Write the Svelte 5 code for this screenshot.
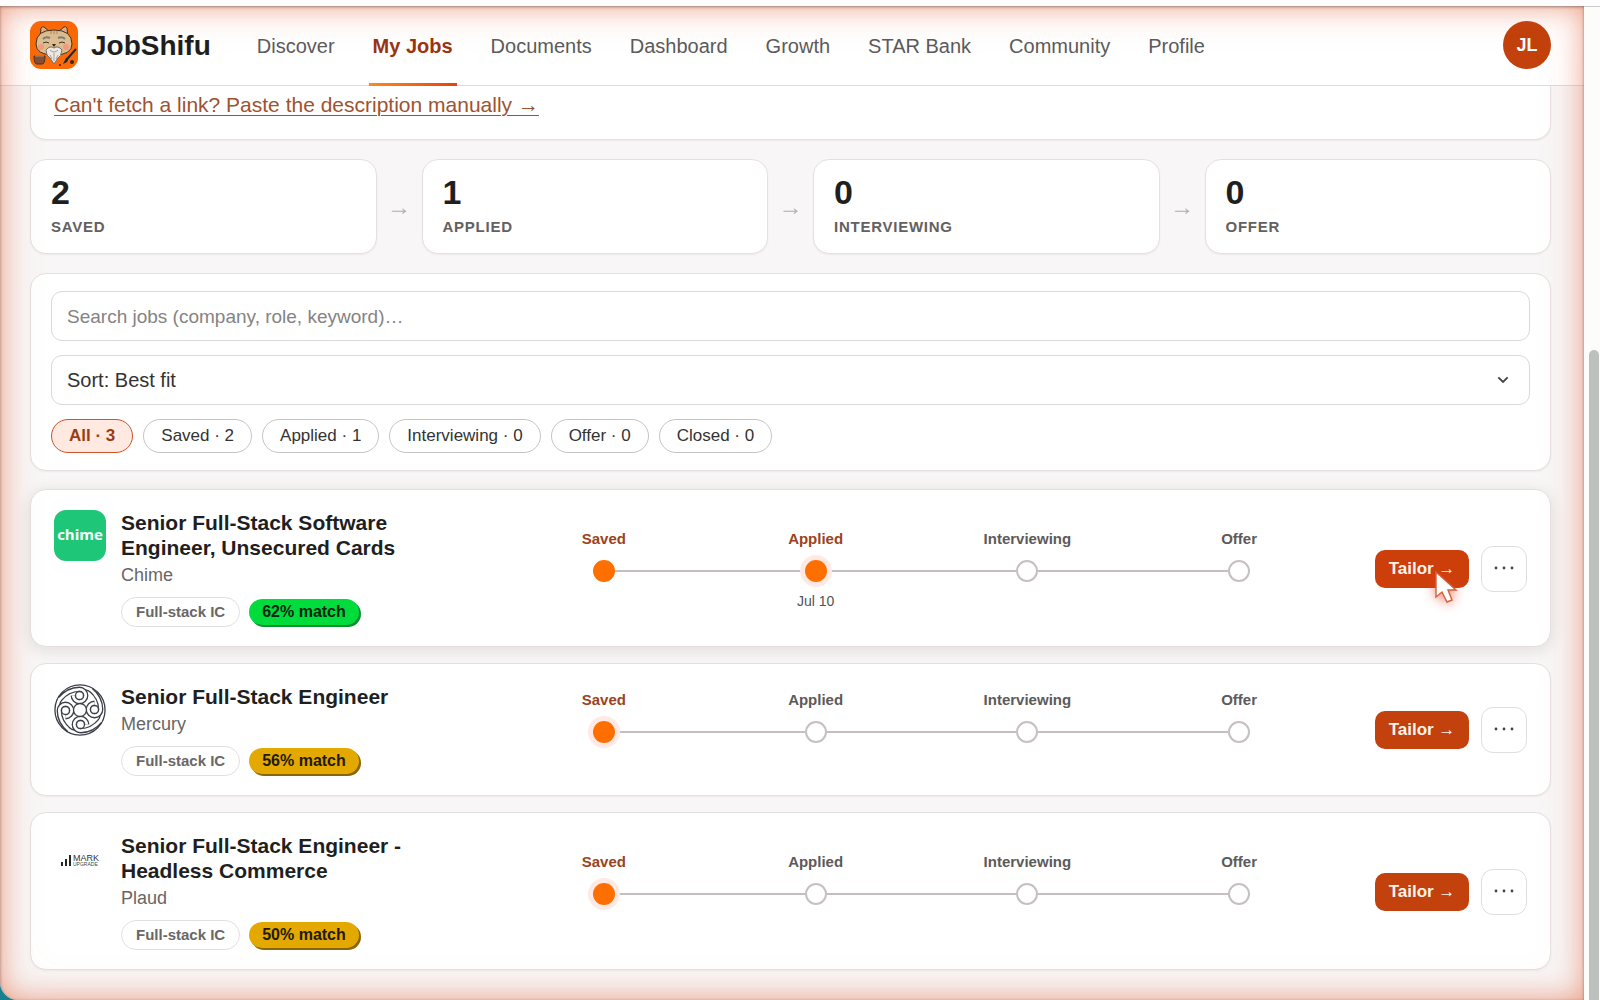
<script lang="ts">
  interface Job {
    id: string;
    title: string;
    company: string;
    role: string;
    match: number;
    stage: number;
    date?: string;
  }

  const navItems = ['Discover', 'My Jobs', 'Documents', 'Dashboard', 'Growth', 'STAR Bank', 'Community', 'Profile'];
  const stages = ['Saved', 'Applied', 'Interviewing', 'Offer'];

  const stats = [
    { label: 'Saved', count: 2 },
    { label: 'Applied', count: 1 },
    { label: 'Interviewing', count: 0 },
    { label: 'Offer', count: 0 }
  ];

  const filters = [{ label: 'All', count: 3 }, ...stats, { label: 'Closed', count: 0 }];

  const jobs: Job[] = [
    {
      id: 'chime',
      title: 'Senior Full-Stack Software Engineer, Unsecured Cards',
      company: 'Chime',
      role: 'Full-stack IC',
      match: 62,
      stage: 1,
      date: 'Jul 10'
    },
    { id: 'mercury', title: 'Senior Full-Stack Engineer', company: 'Mercury', role: 'Full-stack IC', match: 56, stage: 0 },
    {
      id: 'plaud',
      title: 'Senior Full-Stack Engineer - Headless Commerce',
      company: 'Plaud',
      role: 'Full-stack IC',
      match: 50,
      stage: 0
    }
  ];

  let activeNav = $state('My Jobs');
  let activeFilter = $state('All');
  let search = $state('');
  let sort = $state('fit');
</script>

<div class="window">
  <div class="screen">
    <header class="header">
      <a class="brand" href="#home">
        <svg class="brand-logo" viewBox="0 0 48 48" aria-hidden="true">
          <rect width="48" height="48" rx="11" fill="#fb6a06" />
          <path d="M10 16 11 7q1-2 3-1l6 5M28 11l6-5q2-1 3 1l1 9" fill="#d9b98a" stroke="#41301f" />
          <path d="m12 12 1-4 4 4M31 12l4-4 1 4" fill="#e99b84" />
          <path d="M6 23q0-14 18-14t18 14q0 11-18 11T6 23z" fill="#dcbf92" stroke="#41301f" />
          <path d="M21 10v3M24 10v3M27 10v3" stroke="#a58a60" />
          <path d="M13 18q3-3 7-1M28 17q4-2 7 1" fill="none" stroke="#777e80" stroke-width="2" />
          <path d="M13 22q3-2 6 0M29 22q3-2 6 0" fill="none" stroke="#41301f" stroke-width="1" />
          <circle cx="11" cy="26" r="3" fill="#f49a80" />
          <circle cx="36" cy="26" r="3" fill="#f49a80" />
          <path d="M22 23h4l-2 3z" fill="#33251b" />
          <path d="M16 29q4-5 8-2 4-3 8 2-1 7-4 8l-4 6-4-6q-4-2-4-8z" fill="#eee9e2" stroke="#74706b" />
          <path d="M20 29q4 4 8 0M24 32v8M20 34l2 4M28 34l-2 4" fill="none" stroke="#a6a29d" />
          <path d="M4 35h11q0 8-3 8H7q-3 0-3-8z" fill="#855036" stroke="#4d3021" />
          <path d="M5 35h9" stroke="#bda293" />
          <path d="m33 43 3-6 4-2-3 6z" fill="#262626" />
          <path d="m38 37 8-9" stroke="#262626" stroke-width="2" />
          <circle cx="42" cy="41" r="2" fill="#39261c" />
          <circle cx="30" cy="44" r="1" fill="#39261c" />
        </svg>
        <span>JobShifu</span>
      </a>
      <nav class="nav">
        {#each navItems as item (item)}
          <a href="#{item}" class:active={activeNav === item} onclick={() => (activeNav = item)}>{item}</a>
        {/each}
      </nav>
      <button type="button" class="avatar" aria-label="Account">JL</button>
    </header>

    <main class="content">
      <section class="card add-card">
        <a href="#manual">Can't fetch a link? Paste the description manually →</a>
      </section>

      <section class="stats">
        {#each stats as stat, i (stat.label)}
          {#if i > 0}
            <span class="stat-arrow">→</span>
          {/if}
          <div class="card stat">
            <strong>{stat.count}</strong>
            <span>{stat.label}</span>
          </div>
        {/each}
      </section>

      <section class="card filters">
        <input type="search" class="field" aria-label="Search jobs" placeholder="Search jobs (company, role, keyword)…" bind:value={search} />
        <div class="select-wrap">
          <select class="field" aria-label="Sort jobs" bind:value={sort}>
            <option value="fit">Sort: Best fit</option>
            <option value="new">Sort: Newest</option>
          </select>
          <svg viewBox="0 0 12 8" aria-hidden="true"><path d="m2 2 4 4 4-4" /></svg>
        </div>
        <div class="chips">
          {#each filters as filter (filter.label)}
            <button
              type="button"
              class="chip"
              class:active={activeFilter === filter.label}
              onclick={() => (activeFilter = filter.label)}
            >
              {filter.label} · {filter.count}
            </button>
          {/each}
        </div>
      </section>

      <section class="jobs">
        {#each jobs as job, i (job.id)}
          <article class="card job" class:hovered={i === 0}>
            <div class="job-info">
              {#if job.id === 'chime'}
                <svg class="job-logo" viewBox="0 0 52 52" aria-label="Chime">
                  <rect width="52" height="51" rx="12" fill="#1ec677" />
                  <text x="26" y="30" text-anchor="middle" class="chime-text">chime</text>
                </svg>
              {:else if job.id === 'mercury'}
                <svg class="job-logo mercury" viewBox="0 0 52 52" aria-label="Mercury">
                  <circle class="edge" cx="26" cy="26" r="23" />
                  <circle class="fill" cx="26" cy="26" r="23" />
                  {#each [0, 270, 180, 90] as angle (angle)}
                    <g transform="rotate({angle} 26 26)">
                      <path class="edge" d="M6 15Q14 5.300 25.500 5.300a6.200 6.200 0 1 1-6.200 6.200" />
                      <path class="fill" d="M5 16Q14 5.300 25.500 5.300a6.200 6.200 0 1 1-6.200 6.200" />
                      <circle class="hub" cx="25.500" cy="11.500" r="4" />
                    </g>
                  {/each}
                  <circle class="hub" cx="26" cy="26" r="6.5" />
                </svg>
              {:else}
                <svg class="job-logo" viewBox="0 0 52 52" aria-label="Mark Upgrade">
                  <path d="M8 29v4M12 26v7M16 22v11" stroke="#252525" stroke-width="2" />
                  <text x="19" y="28" class="mark-text">MARK</text>
                  <text x="19" y="33" class="upgrade-text">UPGRADE</text>
                </svg>
              {/if}
              <div class="job-text">
                <h2>{job.title}</h2>
                <p>{job.company}</p>
                <div class="tags">
                  <span class="tag">{job.role}</span>
                  <span class="match" class:good={job.match >= 60}>{job.match}% match</span>
                </div>
              </div>
            </div>

            <ol class="track">
              {#each stages as stage, s (stage)}
                <li class:done={s <= job.stage} class:current={s === job.stage}>
                  <span class="step-label">{stage}</span>
                  <span class="marker"><i class="line"></i><i class="dot"></i><i class="line"></i></span>
                  <span class="step-date">{s === job.stage && job.date ? job.date : ''}</span>
                </li>
              {/each}
            </ol>

            <div class="actions">
              <button type="button" class="tailor">Tailor →</button>
              <button type="button" class="more" aria-label="More actions">
                <svg viewBox="0 0 22 4" aria-hidden="true">
                  <circle cx="3" cy="2" r="1.4" /><circle cx="11" cy="2" r="1.4" /><circle cx="19" cy="2" r="1.4" />
                </svg>
              </button>
              {#if i === 0}
                <svg class="cursor" viewBox="0 0 24 34" aria-hidden="true">
                  <path d="M2 2v25l6-5 5 10 5-2-4-10h8z" />
                </svg>
              {/if}
            </div>
          </article>
        {/each}
      </section>
    </main>
  </div>
  <div class="scrollbar"><div class="thumb"></div></div>
</div>

<style>
  :global(body) {
    background: #16818f;
  }

  .window {
    display: flex;
    box-sizing: border-box;
    min-height: 100vh;
    border-top: 6px solid #fdfdfd;
    font-family: 'Liberation Sans', Arial, sans-serif;
    color: #1f1f1f;
  }

  .window *,
  .window *::after {
    box-sizing: border-box;
  }

  .screen {
    position: relative;
    flex: 1;
    min-width: 0;
    overflow: hidden;
    background: #f8f6f6;
    border-bottom-left-radius: 18px;
  }

  /* warm glow round the edges of the shared window */
  .screen::after {
    content: '';
    position: absolute;
    inset: 0;
    border-bottom-left-radius: 18px;
    box-shadow:
      inset 0 1px 3px rgba(70, 40, 30, 0.5),
      inset 0 0 28px rgba(226, 84, 40, 0.52),
      inset 0 0 52px rgba(226, 110, 70, 0.1);
    pointer-events: none;
  }

  .scrollbar {
    display: flex;
    align-items: flex-end;
    justify-content: center;
    width: 16px;
    padding-left: 3px;
    background: #fcfcfb;
    border-top: 1px solid #c9cccb;
  }

  .thumb {
    width: 10px;
    height: 65.5%;
    border-radius: 5px 5px 0 0;
    background: #bdc1be;
  }

  .header {
    display: flex;
    align-items: center;
    height: 80px;
    padding: 0 33px 2px 30px;
    background: #fff;
    border-bottom: 1px solid #dedada;
  }

  .brand {
    display: flex;
    align-items: center;
    gap: 13px;
    margin-right: 42px;
    color: #1f1f1f;
    font-size: 28px;
    font-weight: 700;
    text-decoration: none;
  }

  .brand span {
    padding-top: 3px;
  }

  .brand-logo {
    width: 48px;
    height: 48px;
  }

  .nav {
    display: flex;
    gap: 30px;
    align-self: stretch;
    margin-bottom: -3px;
  }

  .nav a {
    display: flex;
    align-items: center;
    padding: 3px 4px 0;
    border-bottom: 3px solid transparent;
    color: #5b5b5b;
    font-size: 20px;
    text-decoration: none;
    white-space: nowrap;
  }

  .nav a.active {
    color: #9a3412;
    font-weight: 700;
    border-image: linear-gradient(90deg, #ff8a1f, #e8410a) 1;
  }

  .avatar {
    width: 48px;
    height: 48px;
    margin-left: auto;
    padding: 2px 0 0;
    border: none;
    border-radius: 50%;
    background: #c2410c;
    color: #fff;
    font: 700 18px 'Liberation Sans', Arial, sans-serif;
  }

  .content {
    padding: 0 33px 30px 30px;
  }

  .card {
    background: #fff;
    border: 1px solid #e5e0df;
    border-radius: 16px;
    box-shadow: 0 1px 2px rgba(60, 30, 20, 0.06);
  }

  .add-card {
    padding: 7px 23px 22px;
    border-top: none;
    border-radius: 0 0 16px 16px;
  }

  .add-card a {
    display: block;
    color: #a0522f;
    font-size: 21px;
    line-height: 24px;
    text-decoration-thickness: 1px;
    text-underline-offset: 3px;
  }

  .stats {
    display: flex;
    align-items: center;
    margin: 19px 0;
  }

  .stat {
    display: flex;
    flex: 1;
    flex-direction: column;
    height: 95px;
    padding: 13px 20px;
  }

  .stat strong {
    font-size: 34px;
    line-height: 38px;
  }

  .stat span {
    margin-top: 6px;
    color: #636060;
    font-size: 15px;
    font-weight: 700;
    letter-spacing: 0.05em;
    line-height: 20px;
    text-transform: uppercase;
  }

  .stat-arrow {
    width: 45px;
    color: #b5b1b0;
    font-size: 24px;
    text-align: center;
  }

  .filters {
    display: flex;
    flex-direction: column;
    gap: 14px;
    padding: 17px 20px;
  }

  .field {
    width: 100%;
    height: 50px;
    padding: 0 15px;
    border: 1px solid #dcd8d7;
    border-radius: 11px;
    outline: none;
    appearance: none;
    background: #fff;
    color: #333;
    font: 20px 'Liberation Sans', Arial, sans-serif;
  }

  input.field {
    padding-top: 2px;
    font-size: 19px;
  }

  .field::placeholder {
    color: #858383;
  }

  .select-wrap {
    position: relative;
    display: flex;
  }

  .select-wrap svg {
    position: absolute;
    top: 20px;
    right: 20px;
    width: 14px;
    fill: none;
    stroke: #444;
    stroke-width: 1.6;
    pointer-events: none;
  }

  .chips {
    display: flex;
    flex-wrap: wrap;
    gap: 10px;
  }

  .chip {
    height: 34px;
    padding: 0 17px 1px;
    border: 1px solid #c8c4c3;
    border-radius: 17px;
    background: #fff;
    color: #333;
    font: 17px 'Liberation Sans', Arial, sans-serif;
    cursor: pointer;
  }

  .chip.active {
    border-color: #d1532a;
    background: #ffe9e0;
    color: #9a3c12;
    font-weight: 700;
  }

  .jobs {
    display: flex;
    flex-direction: column;
    gap: 16px;
    margin-top: 18px;
  }

  .job {
    display: grid;
    grid-template-columns: 420px minmax(0, 1fr) auto;
    align-items: center;
    column-gap: 24px;
    padding: 20px 23px 19px;
  }

  .job.hovered {
    box-shadow: 0 3px 16px rgba(50, 35, 25, 0.12);
  }

  .job-info {
    display: flex;
    align-self: start;
    gap: 15px;
  }

  .job-logo {
    flex: none;
    width: 52px;
    height: 52px;
  }

  .chime-text {
    fill: #fff;
    font: 700 15px 'Open Sans', sans-serif;
  }

  .mark-text {
    fill: #333;
    font: 9px 'Liberation Sans', sans-serif;
  }

  .upgrade-text {
    fill: #444;
    font: 5px 'Liberation Sans', sans-serif;
  }

  .mercury {
    fill: none;
  }

  .mercury .edge {
    stroke: #3b3e49;
    stroke-width: 5.4;
  }

  .mercury .fill {
    stroke: #fff;
    stroke-width: 2.8;
  }

  .hub {
    fill: #fff;
    stroke: #3b3e49;
    stroke-width: 1.3;
  }

  .job-text h2 {
    max-width: 300px;
    margin: 0;
    font-size: 21px;
    line-height: 25px;
  }

  .job-text p {
    margin: 3px 0 0;
    color: #686565;
    font-size: 18px;
    line-height: 24px;
  }

  .tags {
    display: flex;
    align-items: center;
    gap: 9px;
    margin-top: 10px;
  }

  .tag {
    height: 30px;
    padding: 0 14px;
    border: 1px solid #e2dede;
    border-radius: 15px;
    color: #6a6767;
    font-size: 15px;
    font-weight: 700;
    line-height: 27px;
  }

  .match {
    height: 26px;
    padding: 0 13px;
    border-radius: 13px;
    background: #e3a900;
    box-shadow: 2px 2px 0 #8a6503;
    color: #221a05;
    font-size: 16px;
    font-weight: 700;
    line-height: 26px;
  }

  .match.good {
    background: #00dc3b;
    box-shadow: 2px 2px 0 #078f2d;
    color: #062410;
  }

  .track {
    display: grid;
    grid-template-columns: repeat(4, 1fr);
    margin: 0;
    padding: 0 6px 0 0;
    list-style: none;
    text-align: center;
  }

  .track li,
  .step-label,
  .step-date {
    display: block;
  }

  .step-label {
    color: #5d5a5a;
    font-size: 15px;
    font-weight: 700;
    line-height: 20px;
  }

  .done .step-label {
    color: #9c4220;
  }

  .marker {
    display: flex;
    align-items: center;
    margin: 11px 0 9px;
  }

  .line {
    flex: 1;
    height: 2px;
    background: #c6bfbe;
  }

  li:first-child .line:first-child,
  li:last-child .line:last-child {
    visibility: hidden;
  }

  .dot {
    z-index: 1;
    width: 22px;
    height: 22px;
    border: 2px solid #c6c1c0;
    border-radius: 50%;
    background: #fff;
  }

  .done .dot {
    border-color: #ff6f00;
    background: #ff6f00;
  }

  .current .dot {
    box-shadow: 0 0 0 5px #ffe9e4;
  }

  .step-date {
    height: 18px;
    color: #555252;
    font-size: 14px;
    line-height: 20px;
  }

  .actions {
    position: relative;
    display: flex;
    align-items: center;
    gap: 12px;
  }

  .tailor {
    width: 94px;
    height: 38px;
    padding: 0;
    border: none;
    border-radius: 10px;
    background: #c2410c;
    color: #fff4ec;
    font: 700 17px 'Liberation Sans', Arial, sans-serif;
    cursor: pointer;
  }

  .hovered .tailor {
    background: #cc3f0b;
  }

  .more {
    display: flex;
    align-items: center;
    justify-content: center;
    width: 46px;
    height: 46px;
    padding: 0 0 2px;
    border: 1px solid #e1dddc;
    border-radius: 12px;
    background: #fff;
    fill: #444;
    cursor: pointer;
  }

  .more svg {
    width: 22px;
    height: 4px;
  }

  .cursor {
    position: absolute;
    top: 24px;
    left: 59px;
    width: 24px;
    height: 34px;
    overflow: visible;
    fill: #fff;
    stroke: #d2603c;
    stroke-width: 1.4;
    filter: drop-shadow(0 1px 6px rgba(240, 60, 30, 0.7));
    pointer-events: none;
  }
</style>
